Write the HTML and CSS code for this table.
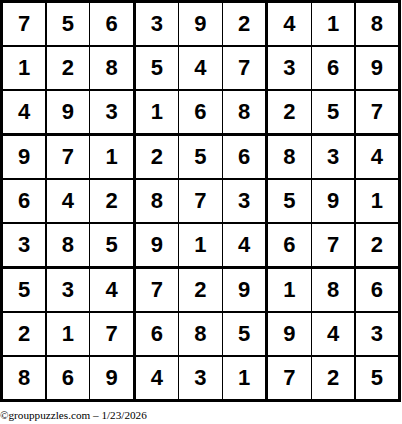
FILE: index.html
```html
<!DOCTYPE html>
<html>
<head>
<meta charset="utf-8">
<link rel="stylesheet" href="styles.css">
</head>
<body>
<div class="board" id="board"></div>
<div class="footer">©grouppuzzles.com – 1/23/2026</div>
<script>
var rows = ["756392418","128547369","493168257","971256834","642873591","385914672","534729186","217685943","869431725"];
var board = document.getElementById('board');
for (var b = 0; b < 9; b++) {
  var box = document.createElement('div');
  box.className = 'box';
  var br = Math.floor(b / 3) * 3, bc = (b % 3) * 3;
  for (var i = 0; i < 9; i++) {
    var r = br + Math.floor(i / 3), c = bc + (i % 3);
    var cell = document.createElement('div');
    cell.className = 'cell';
    cell.textContent = rows[r][c];
    box.appendChild(cell);
  }
  board.appendChild(box);
}
</script>
</body>
</html>
```
FILE: styles.css
```css
html, body {
  margin: 0;
  padding: 0;
  background: #fff;
}
.board {
  width: 401px;
  height: 402px;
  box-sizing: border-box;
  border: 3px solid #000;
  background: #000;
  display: grid;
  grid-template-columns: repeat(3, 1fr);
  grid-template-rows: repeat(3, 1fr);
  gap: 3px;
}
.box {
  display: grid;
  grid-template-columns: repeat(3, 1fr);
  grid-template-rows: repeat(3, 1fr);
  gap: 1.5px;
  background: #000;
}
.cell {
  background: #fff;
  display: flex;
  align-items: center;
  justify-content: center;
  font-family: "Liberation Sans", Arial, sans-serif;
  font-weight: bold;
  font-size: 22px;
  color: #000;
}
.footer {
  font-family: "Liberation Serif", "Times New Roman", serif;
  font-size: 11.2px;
  color: #000;
  margin-top: 7px;
  line-height: 13px;
}
```
